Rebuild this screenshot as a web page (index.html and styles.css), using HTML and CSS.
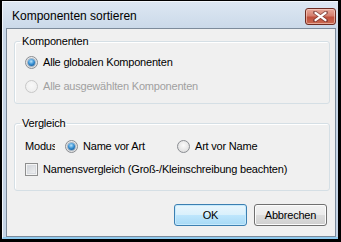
FILE: index.html
```html
<!DOCTYPE html>
<html>
<head>
  <meta charset="utf-8">
  <title>Komponenten sortieren</title>
  <link rel="stylesheet" href="styles.css">
</head>
<body>
  <div class="window">
    <div class="frame">
      <div class="title-bar">
        <div class="title">Komponenten sortieren</div>
        <div class="close-btn">
          <svg width="15" height="11" viewBox="0 0 15 11">
            <path d="M2 1.5 L13 9.5 M13 1.5 L2 9.5" stroke="#5a2a2a" stroke-width="4" stroke-linecap="round" opacity="0.55"/>
            <path d="M2.5 1.8 L12.5 9.2 M12.5 1.8 L2.5 9.2" stroke="#fff" stroke-width="2.2" stroke-linecap="round"/>
          </svg>
        </div>
      </div>

      <div class="client">
        <!-- Komponenten -->
        <fieldset class="group group-components">
          <legend>Komponenten</legend>
          <div class="option-row">
            <span class="radio on"><span class="dot"></span></span>
            <span class="label">Alle globalen Komponenten</span>
          </div>
          <div class="option-row disabled">
            <span class="radio"></span>
            <span class="label">Alle ausgewählten Komponenten</span>
          </div>
        </fieldset>

        <!-- Vergleich -->
        <fieldset class="group group-compare">
          <legend>Vergleich</legend>
          <div class="mode-row">
            <span class="mode-label">Modus</span>
            <span class="mode-option">
              <span class="radio on"><span class="dot"></span></span>
              <span class="label">Name vor Art</span>
            </span>
            <span class="mode-option">
              <span class="radio"></span>
              <span class="label">Art vor Name</span>
            </span>
          </div>
          <div class="option-row">
            <span class="checkbox"></span>
            <span class="label">Namensvergleich (Groß-/Kleinschreibung beachten)</span>
          </div>
        </fieldset>

        <div class="button-row">
          <button class="btn btn-default">OK</button>
          <button class="btn">Abbrechen</button>
        </div>
      </div>
    </div>
  </div>
</body>
</html>
```

FILE: styles.css
```css
:root {
  --face: #f0f0f0;
  --text: #000;
  --disabled: #a0a0a0;
  --group-border: #d5dfe5;
}

* {
  box-sizing: border-box;
  margin: 0;
  padding: 0;
}

html, body {
  width: 341px;
  height: 242px;
  overflow: hidden;
  background: #000;
  font-family: 'Liberation Sans', Arial, sans-serif;
  font-size: 11px;
  letter-spacing: -0.2px;
  color: var(--text);
}

.window {
  width: 341px;
  height: 242px;
  padding: 1px 3px 3px 2px;
  background: #000;
}

/* Window frame */
.frame {
  height: 100%;
  display: flex;
  flex-direction: column;
  background: linear-gradient(#dde7f2, #c8d7e8 30px, #c4d4e6);
  border-top: 1px solid #f2f6fb;
  border-left: 1px solid #f2f6fb;
  border-bottom: 2px solid #8fcaee;
  padding: 0 2px 0 3px;
}

.title-bar {
  height: 26px;
  display: flex;
  align-items: center;
  justify-content: space-between;
  padding-left: 6px;
  padding-top: 1px;
}

.title {
  font-size: 12px;
  letter-spacing: 0;
  color: #000;
}

.close-btn {
  width: 31px;
  height: 17px;
  margin-top: 1px;
  border: 1px solid #6e2c22;
  border-radius: 3px;
  background: linear-gradient(#e9a99b, #d47f6e 45%, #c0503d 55%, #c96a52);
  box-shadow: inset 0 0 0 1px rgba(255, 220, 210, 0.55);
  display: flex;
  align-items: center;
  justify-content: center;
}

/* Client area */
.client {
  flex: 1;
  background: var(--face);
  border: 1px solid #7d8b9b;
  padding: 6px 5px 0 7px;
  display: flex;
  flex-direction: column;
}

.group {
  border: 1px solid var(--group-border);
  border-radius: 3px;
  padding: 0 0 0 10px;
  box-shadow: inset 1px 1px 0 #fff;
}

.group legend {
  margin-left: -5px;
  padding: 0 2px;
  line-height: 13px;
}

.group-components {
  padding-top: 6px;
  padding-bottom: 9px;
  display: flex;
  flex-direction: column;
  gap: 8px;
}

.group-compare {
  margin-top: 13px;
  padding-top: 8px;
  padding-bottom: 13px;
  display: flex;
  flex-direction: column;
  gap: 7px;
}

.option-row,
.mode-row,
.mode-option {
  display: flex;
  align-items: center;
  height: 16px;
}

.option-row.disabled .label {
  color: var(--disabled);
}

.label {
  margin-left: 5px;
  white-space: nowrap;
}

/* the label box is narrower than its text, as in the original dialog */
.mode-label {
  width: 30px;
  overflow: hidden;
  white-space: nowrap;
  margin-right: 10px;
}

.mode-option {
  width: 112px;
}

/* Radio button */
.radio {
  width: 13px;
  height: 13px;
  border-radius: 50%;
  border: 1px solid #8a8d92;
  background: radial-gradient(circle at 50% 40%, #fbfbfb, #e2e2e2 70%, #cfcfcf);
  display: flex;
  align-items: center;
  justify-content: center;
  flex-shrink: 0;
}

.disabled .radio {
  border-color: #c8c8c8;
  background: radial-gradient(circle at 50% 40%, #f8f8f8, #ebebeb);
}

.radio .dot {
  width: 7px;
  height: 7px;
  border-radius: 50%;
  background: radial-gradient(circle at 45% 35%, #b9e4fb, #3d94d6 45%, #135c9c 80%);
  box-shadow: 0 0 0 1px rgba(30, 80, 130, 0.35);
}

/* Checkbox */
.checkbox {
  width: 13px;
  height: 13px;
  border: 1px solid #8e8f8f;
  background: linear-gradient(135deg, #cbcfd5, #f6f6f6);
  box-shadow: inset 0 0 0 1px #f4f4f4, inset 0 0 0 2px #d8dbe0;
  flex-shrink: 0;
}

/* Buttons */
.button-row {
  display: flex;
  justify-content: flex-end;
  gap: 7px;
  margin-top: 13px;
  padding-right: 3px;
}

.btn {
  width: 73px;
  height: 22px;
  font-family: inherit;
  font-size: 11px;
  letter-spacing: inherit;
  color: #000;
  border: 1px solid #707070;
  border-radius: 3px;
  background: linear-gradient(#f2f2f2, #ebebeb 50%, #dddddd 50%, #cfcfcf);
  box-shadow: inset 0 0 0 1px #fcfcfc;
}

.btn-default {
  border-color: #3c7fb1;
  background: linear-gradient(#e9f6fd, #d9f0fc 50%, #bee6fd 50%, #a7d9f5);
  box-shadow: inset 0 0 0 1px #c6eafd;
}
```
